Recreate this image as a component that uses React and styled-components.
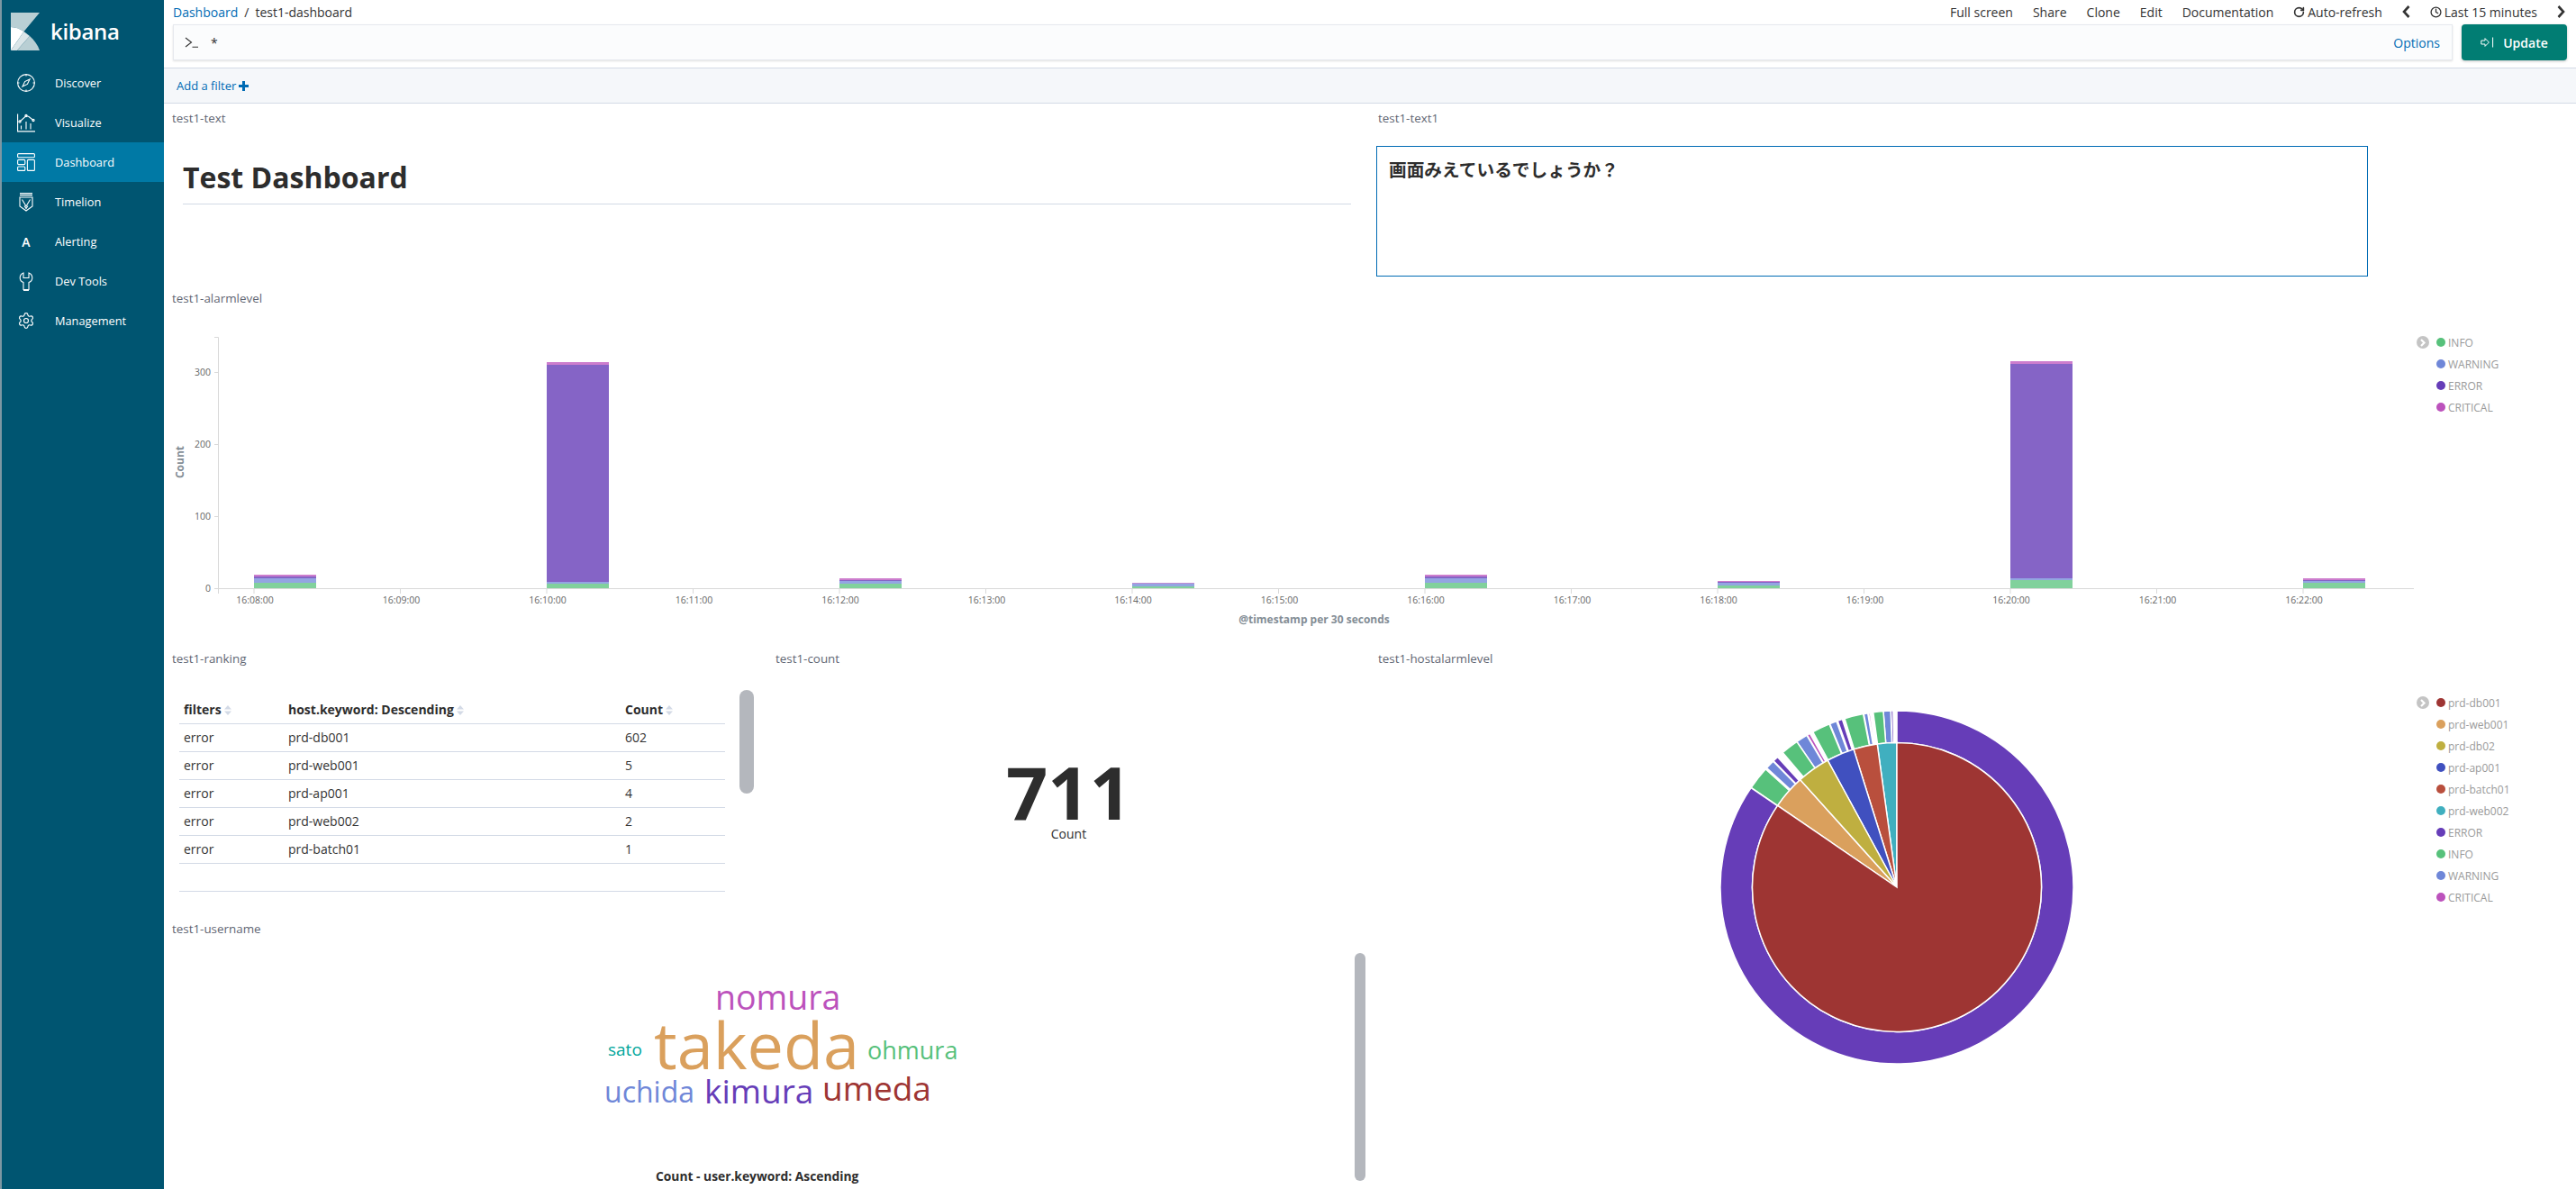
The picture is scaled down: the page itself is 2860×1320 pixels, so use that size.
import React from "react";
import styled, { createGlobalStyle } from "styled-components";
import { Clock, RotateCw, Settings } from "lucide-react";

const GlobalStyle = createGlobalStyle`
  html, body {
    margin: 0;
    height: 100%;
    overflow: hidden;
    background: #fff;
    font-family: "Open Sans", "Noto Sans", sans-serif;
    color: #333;
  }
  #root { height: 100%; }
  * { box-sizing: border-box; }
`;

const Page = styled.div`
  display: flex;
  width: 2860px;
  height: 1320px;
  overflow: hidden;
`;

/* ---- side nav ---- */
const Sidebar = styled.nav`
  width: 182px;
  flex: none;
  background: #005571;
  border-left: 2px solid #7d97a3;
  color: #fff;
`;

const Brand = styled.div`
  display: flex;
  align-items: center;
  gap: 12px;
  height: 70px;
  padding-left: 10px;
  font-size: 24px;
  font-weight: 600;
  letter-spacing: -0.3px;
  span { position: relative; top: -1px; }
`;

const NavItem = styled.div`
  display: flex;
  align-items: center;
  height: 44px;
  padding-left: 17px;
  gap: 22px;
  font-size: 12.8px;
  background: ${(p) => (p.$active ? "#0079a5" : "transparent")};
  svg { flex: none; }
`;

const AlertGlyph = styled.span`
  width: 20px;
  text-align: center;
  font-size: 14px;
  font-weight: 600;
`;

/* ---- top ---- */
const Main = styled.main`
  flex: 1;
  min-width: 0;
  display: flex;
  flex-direction: column;
`;

const TopBar = styled.div`
  display: flex;
  align-items: center;
  justify-content: space-between;
  height: 27px;
  padding: 0 12px 1px 10px;
  font-size: 14px;
`;

const Crumbs = styled.div`
  display: flex;
  gap: 7px;
  a { color: #006bb4; }
`;

const TopMenu = styled.div`
  display: flex;
  align-items: center;
  gap: 22px;
  color: #333;
`;

const MenuIcon = styled.span`
  display: inline-flex;
  align-items: center;
  gap: 3px;
`;

const QueryRow = styled.div`
  display: flex;
  gap: 10px;
  height: 40px;
  padding: 0 10px;
  margin-bottom: 8px;
`;

const QueryBar = styled.div`
  flex: 1;
  display: flex;
  align-items: center;
  gap: 13px;
  padding: 0 13px 0 12px;
  background: #fbfcfd;
  border: 1px solid #e6e9ee;
  box-shadow: 0 1px 2px rgba(0, 0, 0, 0.12);
  font-size: 14px;
  a { margin-left: auto; color: #006bb4; }
`;

const UpdateButton = styled.button`
  width: 117px;
  display: flex;
  align-items: center;
  justify-content: center;
  gap: 9px;
  border: 0;
  border-radius: 4px;
  background: #017d73;
  box-shadow: 0 1px 3px rgba(0, 0, 0, 0.25);
  color: #fff;
  font: 600 14px "Open Sans", sans-serif;
`;

const FilterBar = styled.div`
  display: flex;
  align-items: center;
  gap: 3px;
  height: 40px;
  padding-left: 14px;
  background: #f5f7fa;
  border-top: 1px solid #d3dae6;
  border-bottom: 1px solid #d3dae6;
  color: #006bb4;
  font-size: 13px;
  font-weight: 400;
`;

/* ---- panels ---- */
const Grid = styled.div`
  flex: 1;
  display: grid;
  grid-template-columns: 670px 669px 1339px;
  grid-template-rows: 200px 400px 300px 305px;
`;

const Panel = styled.section`
  position: relative;
  min-width: 0;
  grid-column: ${(p) => p.$col || "auto"};
  grid-row: ${(p) => p.$row || "auto"};
`;

const PanelTitle = styled.h3`
  margin: 0;
  height: 32px;
  padding-left: ${(p) => p.$indent || 9}px;
  font-size: 13.4px;
  font-weight: 400;
  line-height: 32px;
  color: #5f6673;
`;

const Markdown = styled.div`
  padding: 28px 21px 0;
  h1 {
    margin: 0;
    padding-bottom: 7px;
    border-bottom: 1px solid #d3dae6;
    font-size: 32px;
    line-height: 44px;
    font-weight: 700;
    color: #2d2d2d;
  }
`;

const NoteBox = styled.div`
  width: 1101px;
  height: 145px;
  margin: 15px 0 0 7px;
  padding: 10px 13px;
  border: 1px solid #006bb4;
  font-family: "Noto Sans CJK JP", sans-serif;
  font-size: 19.7px;
  font-weight: 700;
  line-height: 30px;
  color: #2d2d2d;
`;

const ChartRow = styled.div`
  display: flex;
  svg { flex: none; display: block; }
`;

const Legend = styled.div`
  display: flex;
  align-items: flex-start;
  gap: 8px;
  padding: 21px 0 0 3px;
`;

const LegendToggle = styled.span`
  display: flex;
  align-items: center;
  justify-content: center;
  width: 14px;
  height: 14px;
  margin-top: 5px;
  border-radius: 50%;
  background: #c4c4c4;
  color: #fff;
`;

const LegendList = styled.ul`
  margin: 0;
  padding: 0;
  list-style: none;
`;

const LegendRow = styled.li`
  display: flex;
  align-items: center;
  gap: 3px;
  height: 24px;
  font-size: 12px;
  color: #9a9a9a;
`;

const Dot = styled.i`
  width: 10px;
  height: 10px;
  border-radius: 50%;
  background: ${(p) => p.$color};
`;

const Table = styled.table`
  width: 606px;
  margin: 25px 0 0 17px;
  table-layout: fixed;
  border-collapse: collapse;
  font-size: 14px;
  th, td {
    height: 31px;
    padding: 0 5px;
    text-align: left;
    border-bottom: 1px solid #d3dae6;
  }
  th { font-weight: 700; color: #2d2d2d; }
  td { color: #333; }
`;

const SortCaret = styled.svg`
  margin-left: 3px;
  vertical-align: -1px;
`;

const ScrollThumb = styled.div`
  position: absolute;
  left: ${(p) => p.$left}px;
  top: ${(p) => p.$top}px;
  width: ${(p) => p.$width}px;
  height: ${(p) => p.$height}px;
  border-radius: 8px;
  background: #b4b7bd;
`;

const Metric = styled.div`
  display: flex;
  flex-direction: column;
  align-items: center;
  padding-top: 97px;
  color: #2d2d2d;
  b { font-size: 81px; line-height: 70px; font-weight: 700; }
  span { font-size: 14px; line-height: 18px; margin-top: 3px; }
`;

const CloudCanvas = styled.div`
  position: relative;
  height: 249px;
`;

const Word = styled.span`
  position: absolute;
  left: ${(p) => p.$x}px;
  top: ${(p) => p.$base - p.$size * 0.838}px;
  font-size: ${(p) => p.$size}px;
  line-height: 0.9;
  color: ${(p) => p.$color};
  white-space: nowrap;
`;

const CloudCaption = styled.div`
  margin-left: 546px;
  font-size: 13.8px;
  font-weight: 700;
  color: #2d2d2d;
`;

const ChartLabel = styled.text`
  font-family: "Open Sans", sans-serif;
  font-size: ${(p) => p.$size || 10.5}px;
  font-weight: ${(p) => p.$weight || 400};
  fill: ${(p) => p.$fill || "#666"};
`;

/* ---- icons ---- */
const KibanaLogo = () => (
  <svg width="32" height="42" viewBox="0 0 32 42">
    <path d="M0 0H32L14.5 21C10 17.8 5 16.2 0 16Z" fill="#b9cfd4" />
    <path d="M0 16C5 16.2 10 17.8 14.5 21L0 42Z" fill="#fff" />
    <path d="M14.5 21L0 42H7L21 26Z" fill="#dbe6e9" />
    <path d="M21 26C26 30.5 30 36 32 42H7Z" fill="#b9cfd4" />
  </svg>
);

const line = { fill: "none", stroke: "#fff", strokeWidth: 1.1 };

const DiscoverIcon = () => (
  <svg width="20" height="20" viewBox="0 0 20 20" {...line}>
    <circle cx="10" cy="10" r="9.4" />
    <path d="M10 0.6V2.5M10 17.5V19.4M0.6 10H2.5M17.5 10H19.4" />
    <path d="M14 6L11.4 11.4L6 14L8.6 8.6Z" />
  </svg>
);

const VisualizeIcon = () => (
  <svg width="20" height="21" viewBox="0 0 20 21" {...line}>
    <path d="M0.6 0.5V19.9H20" />
    <path d="M3 9L10 2.5L13 3.5L18 7.5" />
    <circle cx="3" cy="9" r="1.1" />
    <circle cx="10" cy="2.5" r="1.1" />
    <circle cx="18" cy="7.5" r="1.1" />
    <path d="M4.5 13.5V17.5M10 9V17.5M15 11V17.5" />
  </svg>
);

const DashboardIcon = () => (
  <svg width="20" height="20" viewBox="0 0 20 20" {...line}>
    <rect x="0.6" y="0.6" width="18.8" height="4.2" rx="1" />
    <rect x="0.6" y="7.4" width="8.2" height="5.2" rx="1" />
    <rect x="0.6" y="15" width="8.2" height="4.4" rx="1" />
    <rect x="11.4" y="7.4" width="8" height="12" rx="1" />
  </svg>
);

const TimelionIcon = () => (
  <svg width="20" height="21" viewBox="0 0 20 21" {...line}>
    <path d="M3 0.6H17M3 2.6H17" />
    <path d="M3 5V15L10 20L17 15V5Z" />
    <path d="M5.5 7.5L10 15L14.5 7.5M8 14.5L10 17.5L12 14.5" />
  </svg>
);

const DevToolsIcon = () => (
  <svg width="20" height="21" viewBox="0 0 20 21" {...line}>
    <path d="M7 1C4.5 2 3.2 4.2 3.2 6.5C3.2 9 5 10.8 7 11.6V19.5H13V11.6C15 10.8 16.8 9 16.8 6.5C16.8 4.2 15.5 2 13 1V6.5H7Z" />
    <path d="M7 20.4H13" />
  </svg>
);

const GearIcon = () => <Settings size={20} strokeWidth={1.4} />;

const PromptIcon = () => (
  <svg width="16" height="12" viewBox="0 0 16 12" fill="none" stroke="#333" strokeWidth="1.1">
    <path d="M1 1L7.5 6L1 11M8.5 11.2H15" />
  </svg>
);

const PlusIcon = () => (
  <svg width="11" height="11" viewBox="0 0 11 11" fill="#006bb4">
    <path d="M4 0H7V4H11V7H7V11H4V7H0V4H4Z" />
  </svg>
);

const UpdateIcon = () => (
  <svg width="16" height="12" viewBox="0 0 16 12" fill="none" stroke="#fff" strokeWidth="1">
    <path d="M0.8 4H5V1.6L9.4 6L5 10.4V8H0.8Z" />
    <path d="M13.6 0.5V11.5" />
  </svg>
);

const Chevron = ({ left }) => (
  <svg width="9" height="14" viewBox="0 0 9 14" fill="none" stroke="#333" strokeWidth="2.6">
    <path d={left ? "M7.5 1L2 7L7.5 13" : "M1.5 1L7 7L1.5 13"} />
  </svg>
);

const Sort = () => (
  <SortCaret width="8" height="11" viewBox="0 0 8 11" fill="#d3dae6">
    <path d="M4 0L8 4.5H0ZM4 11L0 6.5H8Z" />
  </SortCaret>
);

const ToggleArrow = () => (
  <svg width="8" height="9" viewBox="0 0 8 9" fill="none" stroke="#fff" strokeWidth="2.2">
    <path d="M2 1L5.5 4.5L2 8" />
  </svg>
);

/* ---- data ---- */
const GREEN = "#57c17b";
const BLUE = "#6f87d8";
const PURPLE = "#663db8";
const PINK = "#bc52bc";

const navItems = [
  ["Discover", <DiscoverIcon />],
  ["Visualize", <VisualizeIcon />],
  ["Dashboard", <DashboardIcon />, true],
  ["Timelion", <TimelionIcon />],
  ["Alerting", <AlertGlyph>A</AlertGlyph>],
  ["Dev Tools", <DevToolsIcon />],
  ["Management", <GearIcon />],
];

const levels = [
  ["INFO", GREEN],
  ["WARNING", BLUE],
  ["ERROR", PURPLE],
  ["CRITICAL", PINK],
];

const hosts = [
  ["prd-db001", "#9e3533"],
  ["prd-web001", "#daa05d"],
  ["prd-db02", "#bfaf40"],
  ["prd-ap001", "#4050bf"],
  ["prd-batch01", "#b94f3d"],
  ["prd-web002", "#40afbf"],
  ...[levels[2], levels[0], levels[1], levels[3]],
];

const rows = [
  ["error", "prd-db001", "602"],
  ["error", "prd-web001", "5"],
  ["error", "prd-ap001", "4"],
  ["error", "prd-web002", "2"],
  ["error", "prd-batch01", "1"],
];

const words = [
  ["nomura", 794, 1121, 37.5, PINK],
  ["takeda", 726, 1187, 72, "#daa05d"],
  ["sato", 675, 1173, 19, "#00a69b"],
  ["ohmura", 963, 1177, 27, GREEN],
  ["uchida", 671, 1225, 32, BLUE],
  ["kimura", 782, 1225, 37, PURPLE],
  ["umeda", 913, 1222, 37, "#9e3533"],
];

// stacks are [green, blue, purple, pink] top y values, drawn from the base at 653
const BAR_LEFT = 282;
const MINUTE = 162.5;
const bars = [
  { minute: 0, stops: [647, 642, 640, 638] },
  { minute: 2, stops: [648, 646, 405, 402] },
  { minute: 4, stops: [648, 645, 644, 642] },
  { minute: 6, stops: [651, 648, 647.5, 647] },
  { minute: 8, stops: [647, 642, 640, 638] },
  { minute: 10, stops: [650, 647, 646, 645] },
  { minute: 12, stops: [644, 642, 404, 401] },
  { minute: 14, stops: [647, 645, 644, 642] },
];
const barColors = [GREEN, BLUE, PURPLE, PINK];

const xTicks = Array.from({ length: 15 }, (_, i) => ({
  x: BAR_LEFT + i * MINUTE,
  label: `16:${String(8 + i).padStart(2, "0")}:00`,
}));

const yTicks = [
  [413, "300"],
  [493, "200"],
  [573, "100"],
  [653, "0"],
];

const CX = 2106;
const CY = 985;
const R_IN = 160.5;
const R_OUT = 196;

const polar = (r, deg) => {
  const a = (deg * Math.PI) / 180;
  return [CX - r * Math.sin(a), CY - r * Math.cos(a)];
};

// angles run counter-clockwise from twelve o'clock
const sector = (r0, r1, a0, a1) => {
  const large = a1 - a0 > 180 ? 1 : 0;
  const [x0, y0] = polar(r1, a0);
  const [x1, y1] = polar(r1, a1);
  if (r0 === 0) {
    return `M${CX} ${CY}L${x0} ${y0}A${r1} ${r1} 0 ${large} 0 ${x1} ${y1}Z`;
  }
  const [x2, y2] = polar(r0, a1);
  const [x3, y3] = polar(r0, a0);
  return `M${x0} ${y0}A${r1} ${r1} 0 ${large} 0 ${x1} ${y1}L${x2} ${y2}A${r0} ${r0} 0 ${large} 1 ${x3} ${y3}Z`;
};

const innerSlices = [
  [0, 7.8, "#40afbf"],
  [7.8, 17.4, "#b94f3d"],
  [17.4, 28.6, "#4050bf"],
  [28.6, 42, "#bfaf40"],
  [42, 55.6, "#daa05d"],
  [55.6, 360, "#9e3533"],
];

const outerSlices = [
  [1.2, 1.9, PURPLE],
  [2, 4.4, BLUE],
  [4.4, 7.7, GREEN],
  [8.7, 9.2, PINK],
  [9.5, 10.8, BLUE],
  [11, 17.2, GREEN],
  [18, 19.6, PURPLE],
  [20, 22.3, BLUE],
  [22.5, 28.4, GREEN],
  [29.5, 30.5, PINK],
  [30.7, 34.5, BLUE],
  [34.5, 40.3, GREEN],
  [42.5, 44.3, PURPLE],
  [44.5, 47.5, BLUE],
  [48, 55.6, GREEN],
  [55.7, 360, PURPLE],
];

/* ---- charts ---- */
function AlarmChart() {
  return (
    <svg width="2498" height="368" viewBox="182 347 2498 368">
      <path d="M238 374.5H242.5V659M238 413.5H242M238 493.5H242M238 573.5H242M238 653.5H2680" fill="none" stroke="#d9d9d9" />
      {xTicks.map((t) => (
        <g key={t.label}>
          <path d={`M${t.x} 654V659`} stroke="#d9d9d9" />
          <ChartLabel x={t.x + 1} y={670} textAnchor="middle">{t.label}</ChartLabel>
        </g>
      ))}
      {yTicks.map(([y, label]) => (
        <ChartLabel key={label} x={234} y={y + 4} textAnchor="end">{label}</ChartLabel>
      ))}
      {bars.map((bar) => {
        const x = BAR_LEFT + bar.minute * MINUTE;
        return bar.stops.map((top, i) => {
          const bottom = i === 0 ? 653 : bar.stops[i - 1];
          return (
            <rect key={`${bar.minute}-${i}`} x={x} y={top} width={69} height={bottom - top} fill={barColors[i]} opacity={i === 2 ? 0.8 : 0.75} />
          );
        });
      })}
      <ChartLabel x={1459} y={692} textAnchor="middle" $size={12} $weight={700} $fill="#848e96">@timestamp per 30 seconds</ChartLabel>
      <ChartLabel x={204} y={513} textAnchor="middle" transform="rotate(-90 204 513)" $size={12} $weight={700} $fill="#848e96">Count</ChartLabel>
    </svg>
  );
}

function HostPie() {
  return (
    <svg width="1159" height="573" viewBox="1521 747 1159 573">
      <g stroke="#fff" strokeWidth="1.5">
        {outerSlices.map(([a0, a1, color]) => (
          <path key={`o${a0}`} d={a1 === 360 ? sector(R_IN, R_OUT, a0, 359.99) : sector(R_IN, R_OUT, a0, a1)} fill={color} />
        ))}
        {innerSlices.map(([a0, a1, color]) => (
          <path key={`i${a0}`} d={sector(0, R_IN, a0, a1)} fill={color} />
        ))}
      </g>
    </svg>
  );
}

const LegendBlock = ({ items }) => (
  <Legend>
    <LegendToggle><ToggleArrow /></LegendToggle>
    <LegendList>
      {items.map(([label, color]) => (
        <LegendRow key={label}>
          <Dot $color={color} />
          {label}
        </LegendRow>
      ))}
    </LegendList>
  </Legend>
);

export default function App() {
  return (
    <Page>
      <GlobalStyle />
      <Sidebar>
        <Brand>
          <KibanaLogo />
          <span>kibana</span>
        </Brand>
        {navItems.map(([label, icon, active]) => (
          <NavItem key={label} $active={active}>
            {icon}
            {label}
          </NavItem>
        ))}
      </Sidebar>

      <Main>
        <TopBar>
          <Crumbs>
            <a>Dashboard</a>
            <span>/</span>
            <span>test1-dashboard</span>
          </Crumbs>
          <TopMenu>
            <span>Full screen</span>
            <span>Share</span>
            <span>Clone</span>
            <span>Edit</span>
            <span>Documentation</span>
            <MenuIcon><RotateCw size={13} strokeWidth={3} />Auto-refresh</MenuIcon>
            <Chevron left />
            <MenuIcon><Clock size={13} strokeWidth={2.4} />Last 15 minutes</MenuIcon>
            <Chevron />
          </TopMenu>
        </TopBar>

        <QueryRow>
          <QueryBar>
            <PromptIcon />
            <span>*</span>
            <a>Options</a>
          </QueryBar>
          <UpdateButton><UpdateIcon />Update</UpdateButton>
        </QueryRow>

        <FilterBar>
          Add a filter
          <PlusIcon />
        </FilterBar>

        <Grid>
          <Panel $col="1 / 3" $row="1">
            <PanelTitle>test1-text</PanelTitle>
            <Markdown><h1>Test Dashboard</h1></Markdown>
          </Panel>
          <Panel $col="3" $row="1">
            <PanelTitle>test1-text1</PanelTitle>
            <NoteBox>画面みえているでしょうか？</NoteBox>
          </Panel>

          <Panel $col="1 / 4" $row="2">
            <PanelTitle>test1-alarmlevel</PanelTitle>
            <ChartRow>
              <AlarmChart />
              <LegendBlock items={levels} />
            </ChartRow>
          </Panel>

          <Panel $col="1" $row="3">
            <PanelTitle>test1-ranking</PanelTitle>
            <Table>
              <colgroup>
                <col width="116" />
                <col width="374" />
                <col width="116" />
              </colgroup>
              <thead>
                <tr>
                  <th>filters<Sort /></th>
                  <th>host.keyword: Descending<Sort /></th>
                  <th>Count<Sort /></th>
                </tr>
              </thead>
              <tbody>
                {rows.map((row) => (
                  <tr key={row[1]}>
                    {row.map((cell, i) => <td key={i}>{cell}</td>)}
                  </tr>
                ))}
                <tr><td colSpan={3} /></tr>
              </tbody>
            </Table>
            <ScrollThumb $left={639} $top={51} $width={16} $height={115} />
          </Panel>

          <Panel $col="2" $row="3">
            <PanelTitle>test1-count</PanelTitle>
            <Metric>
              <b>711</b>
              <span>Count</span>
            </Metric>
          </Panel>

          <Panel $col="1 / 3" $row="4">
            <PanelTitle>test1-username</PanelTitle>
            <CloudCanvas>
              {words.map(([text, x, base, size, color]) => (
                <Word key={text} $x={x - 182} $base={base - 1047} $size={size} $color={color}>{text}</Word>
              ))}
            </CloudCanvas>
            <CloudCaption>Count - user.keyword: Ascending</CloudCaption>
            <ScrollThumb $left={1322} $top={43} $width={12} $height={253} />
          </Panel>

          <Panel $col="3" $row="3 / 5">
            <PanelTitle $indent={9}>test1-hostalarmlevel</PanelTitle>
            <ChartRow>
              <HostPie />
              <LegendBlock items={hosts} />
            </ChartRow>
          </Panel>
        </Grid>
      </Main>
    </Page>
  );
}
